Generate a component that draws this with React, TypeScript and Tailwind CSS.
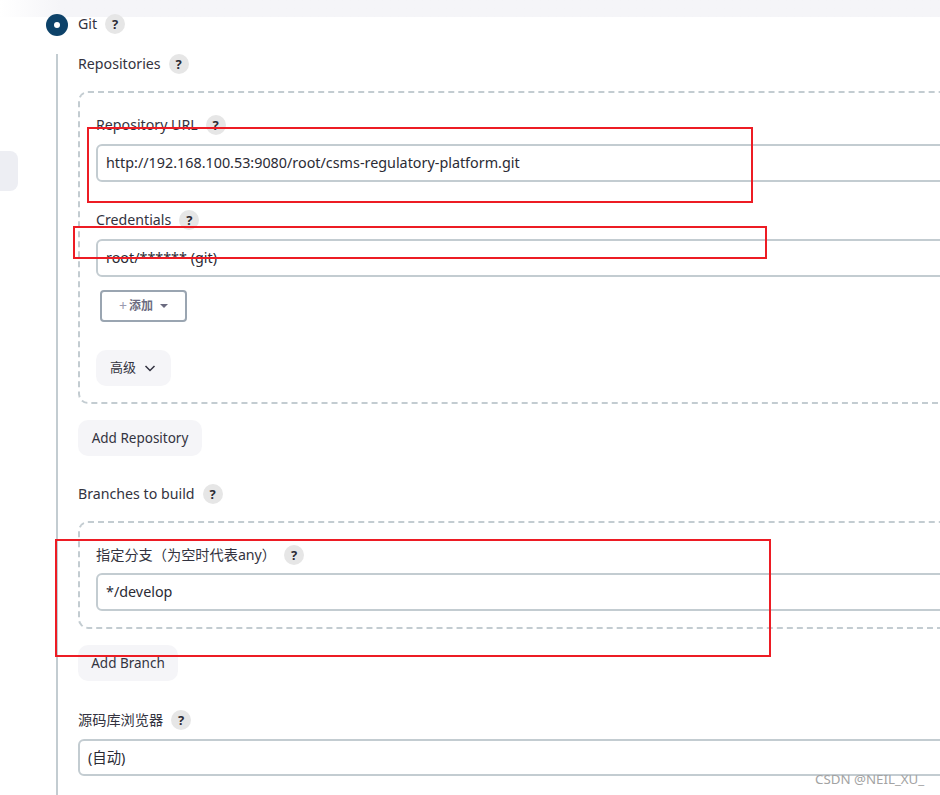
const font = { fontFamily: '"Noto Sans", "Noto Sans CJK SC", sans-serif' };

function Help() {
  return (
    <span className="flex h-5 w-5 shrink-0 items-center justify-center rounded-full bg-[#e6e6e6] text-[13px] font-bold text-[#2b2b35]">
      ?
    </span>
  );
}

function Label({ text }: { text: string }) {
  return (
    <div className="flex h-5 items-center gap-2 text-[14.2px] leading-5 text-[#333340]">
      <span>{text}</span>
      <Help />
    </div>
  );
}

function Input({ value, className = "h-[38px]" }: { value: string; className?: string }) {
  return (
    <div className={`flex w-[1000px] items-center rounded-md border-2 border-[#c3ccd1] bg-white pl-2 text-[14.35px] text-[#2b2b35] ${className}`}>
      {value}
    </div>
  );
}

function PlainButton({ children, className }: { children: React.ReactNode; className: string }) {
  return (
    <div className={`flex h-9 items-center rounded-[10px] bg-[#f5f5f8] text-[13.5px] text-[#333340] ${className}`}>
      {children}
    </div>
  );
}

export default function App() {
  return (
    <div style={font} className="relative h-[795px] w-[940px] overflow-hidden bg-white">
      {/* top bar */}
      <div className="h-[17px] bg-gradient-to-r from-white to-[#f5f5f8] to-[60px]" />

      {/* side tab */}
      <div className="absolute left-0 top-[151px] h-10 w-[18px] rounded-r-lg bg-[#edeef3]" />

      {/* git radio row */}
      <div className="relative ml-[46px] -mt-[3px] flex h-[22px] items-center gap-[10px]">
        <div className="flex h-[22px] w-[22px] items-center justify-center rounded-full bg-[#0d4269]">
          <span className="h-[6px] w-[6px] rounded-full bg-white" />
        </div>
        <div className="-mt-0.5">
          <Label text="Git" />
        </div>
      </div>

      <div className="ml-[56px] mt-[18px] w-[1000px] border-l-2 border-[#c3ccd1] pl-5 pb-10">
        <Label text="Repositories" />

        {/* repo box */}
        <div className="mt-[17px] h-[313px] w-[1000px] rounded-[10px] border-2 border-dashed border-[#c3ccd1] pl-4 pt-[22px]">
          <Label text="Repository URL" />
          <div className="mt-[9px]">
            <Input value="http://192.168.100.53:9080/root/csms-regulatory-platform.git" />
          </div>
          <div className="mt-7">
            <Label text="Credentials" />
          </div>
          <div className="mt-[9px]">
            <Input value="root/****** (git)" />
          </div>
          <div className="ml-1 mt-[13px] flex h-8 w-[87px] items-center gap-[2px] rounded-[4px] border-2 border-[#9aa5b1] pl-[17px] text-[12px] font-bold text-[#6b6b80]">
            <span className="text-[14px] font-normal leading-none text-[#9a9ab0]">+</span>
            <span>添加</span>
            <svg width="8" height="4" viewBox="0 0 8 4" className="ml-[5px]">
              <path d="M0 0h8L4 4z" fill="#6b6b80" />
            </svg>
          </div>
          <PlainButton className="mt-7 w-[75px] gap-2 pl-[14px]">
            <span className="text-[13px]">高级</span>
            <svg width="12" height="12" viewBox="0 0 12 12" fill="none" stroke="#333340" strokeWidth="1.5">
              <path d="M1.5 4l4.5 4.5L10.5 4" />
            </svg>
          </PlainButton>
        </div>

        <PlainButton className="mt-4 w-[124px] justify-center">Add Repository</PlainButton>

        <div className="mt-7">
          <Label text="Branches to build" />
        </div>

        {/* branch box */}
        <div className="mt-[17px] h-[108px] w-[1000px] rounded-[10px] border-2 border-dashed border-[#c3ccd1] pl-4 pt-[22px]">
          <Label text="指定分支（为空时代表any）" />
          <div className="mt-2">
            <Input value="*/develop" />
          </div>
        </div>

        <PlainButton className="mt-4 w-[100px] justify-center">Add Branch</PlainButton>

        <div className="mt-[29px]">
          <Label text="源码库浏览器" />
        </div>
        <div className="mt-[9px]">
          <Input value="(自动)" className="h-[37px]" />
        </div>
      </div>

      {/* annotation boxes */}
      <div className="absolute left-[87px] top-[127px] h-[76px] w-[666px] border-2 border-[#ed1c24]" />
      <div className="absolute left-[73px] top-[226px] h-[33px] w-[694px] border-2 border-[#ed1c24]" />
      <div className="absolute left-[55px] top-[539px] h-[118px] w-[716px] border-2 border-[#ed1c24]" />

      {/* watermark */}
      <div className="absolute left-[815px] top-[771px] text-[13.3px] leading-4 text-[#a3a3a3]">CSDN @NEIL_XU_</div>
    </div>
  );
}
